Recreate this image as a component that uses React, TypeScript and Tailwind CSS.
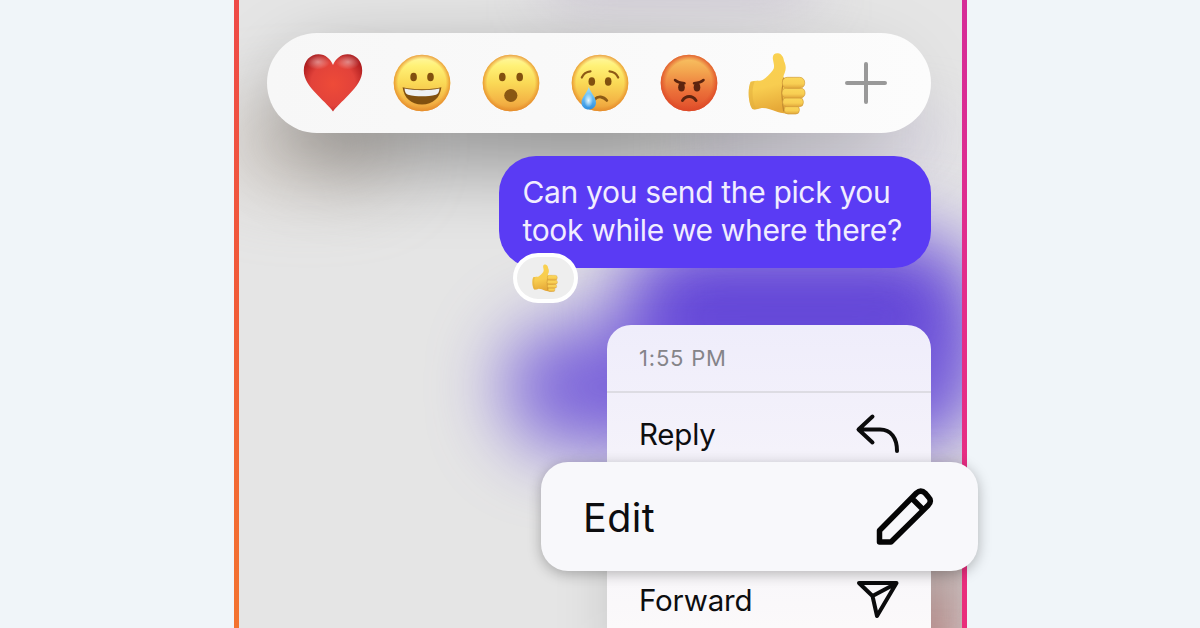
import type { ReactNode } from "react";

const Heart = () => (
    <svg viewBox="0 0 60 60" className="h-[60px] w-[60px]">
        <defs>
            <radialGradient id="heart" cx="0.5" cy="0.52" r="0.58">
                <stop offset="0" stopColor="#ee4b38" />
                <stop offset="0.65" stopColor="#e2423a" />
                <stop offset="1" stopColor="#ae1d1f" />
            </radialGradient>
            <radialGradient id="heartShine">
                <stop offset="0" stopColor="#fff" stopOpacity="0.42" />
                <stop offset="1" stopColor="#fff" stopOpacity="0" />
            </radialGradient>
        </defs>
        <path
            d="M30 58.6C27 54 21 49 14.500 42C6 33 .8 26.500 .8 17.500C.8 8 7 1.200 15.500 1.200C22.500 1.200 27.500 6 30 12C32.500 6 37.500 1.200 44.500 1.200C53 1.200 59.200 8 59.200 17.500C59.200 26.500 54 33 45.500 42C39 49 33 54 30 58.600Z"
            fill="url(#heart)"
        />
        <ellipse cx="15" cy="9" rx="12" ry="7.500" fill="url(#heartShine)" />
        <ellipse cx="45" cy="9" rx="12" ry="7.500" fill="url(#heartShine)" />
    </svg>
);

const Face = ({ angry, children }: { angry?: boolean; children: ReactNode }) => (
    <svg viewBox="0 0 58 58" className="h-[58px] w-[58px]">
        <defs>
            <linearGradient id="yellowFace" x1="0" y1="0" x2="0" y2="1">
                <stop offset="0" stopColor="#fff9a8" />
                <stop offset="0.2" stopColor="#fff176" />
                <stop offset="0.5" stopColor="#fad956" />
                <stop offset="0.85" stopColor="#f3b144" />
                <stop offset="1" stopColor="#e99a34" />
            </linearGradient>
            <linearGradient id="redFace" x1="0" y1="0" x2="0" y2="1">
                <stop offset="0" stopColor="#f8c765" />
                <stop offset="0.3" stopColor="#f3a44e" />
                <stop offset="0.65" stopColor="#eb7039" />
                <stop offset="1" stopColor="#e04c2a" />
            </linearGradient>
            <radialGradient id="yellowRim">
                <stop offset="0.84" stopColor="#e8902c" stopOpacity="0" />
                <stop offset="1" stopColor="#e5892a" stopOpacity="0.8" />
            </radialGradient>
            <radialGradient id="redRim">
                <stop offset="0.8" stopColor="#e04d28" stopOpacity="0" />
                <stop offset="1" stopColor="#dc4826" stopOpacity="0.8" />
            </radialGradient>
            <linearGradient id="tear" x1="0" y1="0" x2="0" y2="1">
                <stop offset="0" stopColor="#9fe0fb" />
                <stop offset="0.5" stopColor="#62b9f3" />
                <stop offset="1" stopColor="#2e8ede" />
            </linearGradient>
            <radialGradient id="tearShine">
                <stop offset="0" stopColor="#e6f8ff" />
                <stop offset="1" stopColor="#e6f8ff" stopOpacity="0" />
            </radialGradient>
        </defs>
        <circle cx="29" cy="29" r="28.300" fill={angry ? "url(#redFace)" : "url(#yellowFace)"} />
        <circle cx="29" cy="29" r="28.300" fill={angry ? "url(#redRim)" : "url(#yellowRim)"} />
        {children}
    </svg>
);

const Eyes = ({ left, right, y, color = "#82500f" }: { left: number; right: number; y: number; color?: string }) => (
    <g fill={color}>
        <ellipse cx={left} cy={y} rx="3.300" ry="4.300" />
        <ellipse cx={right} cy={y} rx="3.300" ry="4.300" />
    </g>
);

const ThumbsUp = ({ className }: { className: string }) => (
    <svg viewBox="295 33 174 189" className={className}>
        <defs>
            <linearGradient id="thumb" x1="0" y1="0" x2="0.2" y2="1">
                <stop offset="0" stopColor="#fad250" />
                <stop offset="0.6" stopColor="#f8cd50" />
                <stop offset="1" stopColor="#e6a938" />
            </linearGradient>
            <linearGradient id="finger" x1="0" y1="0" x2="0" y2="1">
                <stop offset="0" stopColor="#fbd75a" />
                <stop offset="0.6" stopColor="#f8ce53" />
                <stop offset="1" stopColor="#e0a63a" />
            </linearGradient>
        </defs>
        <path
            d="M303 122C315 118 330 121 339 117C350 110 362 98 370 87C376 78 372 68 370 56C367 42 375 36 385 37C396 38 402 50 403 60C409 72 410 84 405 96C402 101 402 105 401 110H430L445 216C428 221 400 218 384 213C366 207 350 200 336 201C325 204 316 207 308 204C296 188 293 143 303 122Z"
            fill="url(#thumb)"
        />
        <path d="M303 122C293 143 296 188 308 204C313 206 317 205 321 204C308 188 304 146 315 120.500Z" fill="#e2ae3c" opacity="0.5" />
        <path d="M403 110C396 119 401 130 398 140C395 160 398 184 402 211" fill="none" stroke="#bd862f" strokeWidth="3.500" />
        <g fill="url(#finger)" stroke="#d29c3a" strokeWidth="2">
            <rect x="404" y="194" width="45" height="25" rx="11" />
            <rect x="399" y="170" width="62" height="27" rx="12" />
            <rect x="397" y="141" width="69" height="30" rx="14" />
            <rect x="398" y="109" width="67" height="33" rx="15" />
        </g>
    </svg>
);

const reactions = [
    { name: "love", icon: <Heart /> },
    {
        name: "grin",
        icon: (
            <Face>
                <Eyes left={20.600} right={37.500} y={23} />
                <path d="M9.600 33.300C22 36 36 36 48.400 33.300C47 44 40 50.500 29 50.500C18 50.500 11 44 9.600 33.300Z" fill="#81500f" />
                <path d="M11.500 34.600C22 36.700 36 36.700 46.500 34.600C46.300 38 45 40.300 43 40.800C34 42.800 24 42.800 15 40.800C13 40.300 11.700 38 11.500 34.600Z" fill="#eef0f3" />
            </Face>
        ),
    },
    {
        name: "wow",
        icon: (
            <Face>
                <Eyes left={20.300} right={37.700} y={23} />
                <ellipse cx="28.800" cy="41.500" rx="6.600" ry="6.400" fill="#8a5713" />
            </Face>
        ),
    },
    {
        name: "sad",
        icon: (
            <Face>
                <Eyes left={20.800} right={37.200} y={27.500} />
                <g fill="none" stroke="#8c5915" strokeLinecap="round" strokeWidth="2.200">
                    <path d="M10.800 23.500C12.500 19.500 15.500 17.600 19.500 17.300" />
                    <path d="M38.500 17.300C42.500 17.600 45.500 19.500 47.200 23.500" />
                    <path d="M23.500 45.500C27 41.700 32.500 42.300 35.800 46.500" strokeWidth="2.800" />
                </g>
                <path d="M17.800 33C19.500 38.500 25 43.500 25 48.500C25 52.800 21.800 55.500 17.800 55.500C13.800 55.500 10.500 52.800 10.500 48.500C10.500 43.500 16.200 38.500 17.800 33Z" fill="url(#tear)" />
                <ellipse cx="17.500" cy="46.500" rx="4.500" ry="7" fill="url(#tearShine)" />
            </Face>
        ),
    },
    {
        name: "angry",
        icon: (
            <Face angry>
                <Eyes left={21.500} right={37} y={33.300} color="#5c240f" />
                <g fill="none" stroke="#5c240f" strokeLinecap="round" strokeWidth="2.500">
                    <path d="M15 26C17 28 20.500 29 24.500 29.300" />
                    <path d="M34 29.300C38 29 41.500 28 43.500 26" />
                    <path d="M22.500 46.500C26 41.300 32.500 41.300 36 46.500" strokeWidth="3" />
                </g>
            </Face>
        ),
    },
    { name: "like", icon: <ThumbsUp className="h-[63px] w-[58px]" /> },
];

// soft shapes behind the chat, plus the shadows of the reaction bar and menu
const Backdrop = () => (
    <div className="absolute inset-0 overflow-hidden bg-[#e5e5e5]">
        <div className="absolute -left-[20px] top-[100px] h-[90px] w-[180px] rounded-full bg-[#b3a08f]/35 blur-[35px]" />
        <div className="absolute left-[310px] -top-[60px] h-[60px] w-[260px] bg-[#b9adc6]/60 blur-[30px]" />
        <div className="absolute left-[450px] top-[110px] h-[60px] w-[260px] bg-[#d3cbe6]/40 blur-[25px]" />
        <div className="absolute left-[385px] top-[237px] h-[160px] w-[350px] rounded-[60px] bg-[#6143d8] blur-[38px]" />
        <div className="absolute left-[265px] top-[325px] h-[124px] w-[470px] rounded-[62px] bg-[#6a4fd8]/85 blur-[36px]" />
        <div className="absolute left-[655px] top-[490px] h-[180px] w-[90px] bg-[#a88a88]/60 blur-[28px]" />
        <div className="absolute left-[660px] top-[600px] h-[70px] w-[50px] bg-[#c0706e]/50 blur-[20px]" />
        <div className="absolute left-[375px] top-[480px] h-[180px] w-[310px] bg-black/16 blur-[28px]" />
        <div className="absolute left-[38px] top-[57px] h-[112px] w-[640px] rounded-full bg-linear-to-r from-black/28 via-black/36 to-black/10 blur-[36px]" />
    </div>
);

export default function App() {
    return (
        <div className="flex h-[628px] w-[1200px] overflow-hidden bg-[#f0f5f9] pl-[234px] font-['Inter',sans-serif]">
            <div className="w-[5px] bg-linear-to-b from-[#ee4947] via-[#f15b37] to-[#f3732f]" />
            <main className="relative w-[723px]">
                <Backdrop />
                <div className="relative flex flex-col items-end pr-[31px] pt-[33px]">
                    <div className="flex h-[100px] w-[664px] items-center rounded-full bg-linear-to-r from-[#f7f7f7] to-[#fcfcfc] pl-[21.5px]">
                        {reactions.map((reaction) => (
                            <button key={reaction.name} className="flex w-[88.900px] justify-center">
                                {reaction.icon}
                            </button>
                        ))}
                        <svg viewBox="0 0 42 42" className="ml-[23px] h-[42px] w-[42px]" stroke="#999" strokeWidth="4" strokeLinecap="round">
                            <path d="M21 2V40M2 21H40" />
                        </svg>
                    </div>

                    <div className="relative mt-[23px] h-[112px] w-[432px] rounded-[37px] bg-[#5a3bf4] pl-[23.5px] pt-[17px] text-[30px] leading-[38px] tracking-[-0.34px] text-[#f1edff]">
                        <p className="whitespace-nowrap">Can you send the pick you</p>
                        <p className="whitespace-nowrap">took while we where there?</p>
                        <div className="absolute left-[13.5px] top-[96.5px] flex h-[50px] w-[65.5px] items-center justify-center rounded-full border-4 border-white bg-[#eee]">
                            <ThumbsUp className="h-[28px] w-[26px]" />
                        </div>
                    </div>

                    <div className="mt-[57px] flex h-[303px] w-[324px] flex-col rounded-t-[24px] bg-linear-to-b from-[#efedfb] via-[#f5f3fa] to-[#fbf9fa] text-[29.5px] text-[#0d0d0f]">
                        <div className="flex h-[68px] shrink-0 items-center border-b-2 border-[#dddce3] pl-8 text-[22px] tracking-[0.8px] text-[#858489]">
                            1:55 PM
                        </div>
                        <div className="flex h-[69px] shrink-0 justify-between pl-8 pr-[30px] pt-[22px]">
                            <span className="leading-[38px] tracking-[-0.2px]">Reply</span>
                            <svg viewBox="855 412 46 44" className="-mt-[3px] h-[44px] w-[46px]" fill="none" stroke="#0b0b0c" strokeWidth="4" strokeLinecap="round" strokeLinejoin="round">
                                <path d="M872.500 416.500L858.500 429.500L872.500 442.500M859 429.500H880C891 429.500 897 438 897 451" />
                            </svg>
                        </div>
                        <div className="relative -ml-[66px] -mr-[47px] flex h-[109px] shrink-0 items-center justify-between rounded-[27px] bg-[#f8f8fb] pl-[42px] pr-[42px] text-[39.5px] shadow-[0_3px_14px_rgba(0,0,0,0.28)]">
                            <span className="pt-[5px] tracking-[0.4px]">Edit</span>
                            <svg viewBox="875 485 62 62" className="h-[62px] w-[62px]" fill="none" stroke="#050505" strokeWidth="5.500" strokeLinejoin="round">
                                <path d="M880.500 541V529.500L917.500 492Q922 488 926.500 492.500L929 495.500Q933.500 500 929 504.500L892 541ZM912.500 497L925 509.500" />
                            </svg>
                        </div>
                        <div className="flex justify-between pl-8 pr-[30px] pt-[10px]">
                            <span className="leading-[38px] tracking-[-0.2px]">Forward</span>
                            <svg viewBox="855 579 46 42" className="-mt-[2px] h-[42px] w-[46px]" fill="none" stroke="#0b0b0c" strokeWidth="4" strokeLinejoin="round">
                                <path d="M859 583H896.500L877 616L872.500 596ZM872.500 596L896 583.500" />
                            </svg>
                        </div>
                    </div>
                </div>
            </main>
            <div className="w-[5px] bg-linear-to-b from-[#d62c98] via-[#e42d8a] to-[#ea2e7b]" />
        </div>
    );
}
